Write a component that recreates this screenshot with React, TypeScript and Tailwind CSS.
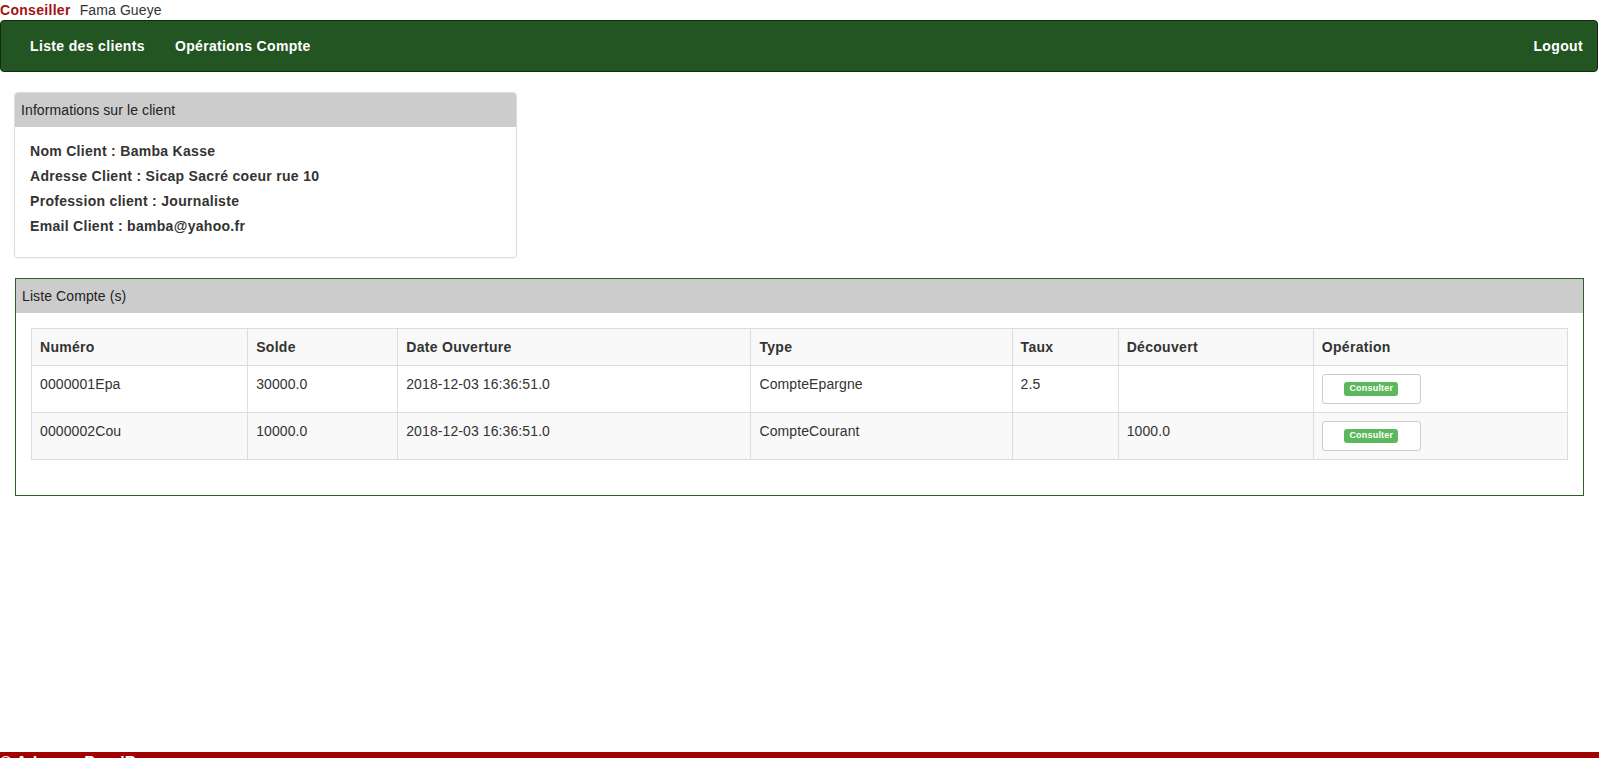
import React from "react";

const comptes = [
  { numero: "0000001Epa", solde: "30000.0", date: "2018-12-03 16:36:51.0", type: "CompteEpargne", taux: "2.5", decouvert: "" },
  { numero: "0000002Cou", solde: "10000.0", date: "2018-12-03 16:36:51.0", type: "CompteCourant", taux: "", decouvert: "1000.0" },
];

const colWidths = ["w-[216px]", "w-[150px]", "w-[353px]", "w-[261px]", "w-[106px]", "w-[195px]", "w-[254px]"];
const headers = ["Numéro", "Solde", "Date Ouverture", "Type", "Taux", "Découvert", "Opération"];

export default function App() {
  return (
    <div className="font-['Liberation_Sans',Arial,sans-serif] text-[14px] text-[#333] tracking-[0.1px]">
      <div className="min-h-[752px]">
        <div className="h-[20px] leading-[20px] flex">
          <span className="font-bold text-[#a31212] tracking-[0.3px]">Conseiller</span>
          <span className="ml-[9px] text-[#333]">Fama Gueye</span>
        </div>

        <nav className="h-[52px] w-[1598px] bg-[#235522] border border-[#102b10] rounded-[4px] flex items-center justify-between px-[14px]">
          <div className="flex">
            <a className="px-[15px] font-bold text-white leading-[20px] tracking-[0.35px]">Liste des clients</a>
            <a className="px-[15px] font-bold text-white leading-[20px] tracking-[0.35px]">Opérations Compte</a>
          </div>
          <a className="font-bold text-white leading-[20px] tracking-[0.35px]">Logout</a>
        </nav>

        <div className="ml-[14px] mt-[20px] w-[503px] border border-[#ddd] rounded-[4px] shadow-[0_1px_1px_rgba(0,0,0,0.05)]">
          <div className="h-[34px] bg-[#cccccc] rounded-t-[3px] flex items-center pl-[6px] text-[#222]">
            Informations sur le client
          </div>
          <div className="pl-[15px] pt-[12px] pb-[18px] font-bold tracking-[0.3px]">
            <div className="leading-[25px]">Nom Client : Bamba Kasse</div>
            <div className="leading-[25px]">Adresse Client : Sicap Sacré coeur rue 10</div>
            <div className="leading-[25px]">Profession client : Journaliste</div>
            <div className="leading-[25px]">Email Client : bamba@yahoo.fr</div>
          </div>
        </div>

        <div className="ml-[15px] mt-[20px] w-[1569px] border border-[#2e5e2e]">
          <div className="h-[34px] bg-[#cccccc] flex items-center pl-[6px] text-[#222]">
            Liste Compte (s)
          </div>
          <div className="px-[15px] pt-[15px] pb-[35px]">
            <table className="w-[1537px] table-fixed border-collapse border border-[#ddd]">
              <colgroup>
                {colWidths.map((w, i) => (
                  <col key={i} className={w} />
                ))}
              </colgroup>
              <tbody>
                <tr className="bg-[#f9f9f9]">
                  {headers.map((h) => (
                    <td key={h} className="border border-[#ddd] p-[8px] leading-[20px] font-bold text-left align-top tracking-[0.3px]">
                      {h}
                    </td>
                  ))}
                </tr>
                {comptes.map((c, i) => (
                  <tr key={c.numero} className={i % 2 === 0 ? "bg-white" : "bg-[#f9f9f9]"}>
                    <td className="border border-[#ddd] p-[8px] leading-[20px] align-top">{c.numero}</td>
                    <td className="border border-[#ddd] p-[8px] leading-[20px] align-top">{c.solde}</td>
                    <td className="border border-[#ddd] p-[8px] leading-[20px] align-top">{c.date}</td>
                    <td className="border border-[#ddd] p-[8px] leading-[20px] align-top">{c.type}</td>
                    <td className="border border-[#ddd] p-[8px] leading-[20px] align-top">{c.taux}</td>
                    <td className="border border-[#ddd] p-[8px] leading-[20px] align-top">{c.decouvert}</td>
                    <td className="border border-[#ddd] p-[8px] leading-[20px] align-top">
                      <button className="w-[99px] h-[30px] bg-white border border-[#ccc] rounded-[3px] flex items-center justify-center">
                        <span className="bg-[#5cb85c] text-white text-[9px] font-bold leading-none px-[5px] pt-[2px] pb-[3px] rounded-[3px] tracking-[0.2px]">
                          Consulter
                        </span>
                      </button>
                    </td>
                  </tr>
                ))}
              </tbody>
            </table>
          </div>
        </div>
      </div>

      <footer className="bg-[#a30000] text-white font-bold text-[16px] leading-[20px] pt-[1px] pb-[10px]">
        © Adresse ProxiBanque
      </footer>
    </div>
  );
}
